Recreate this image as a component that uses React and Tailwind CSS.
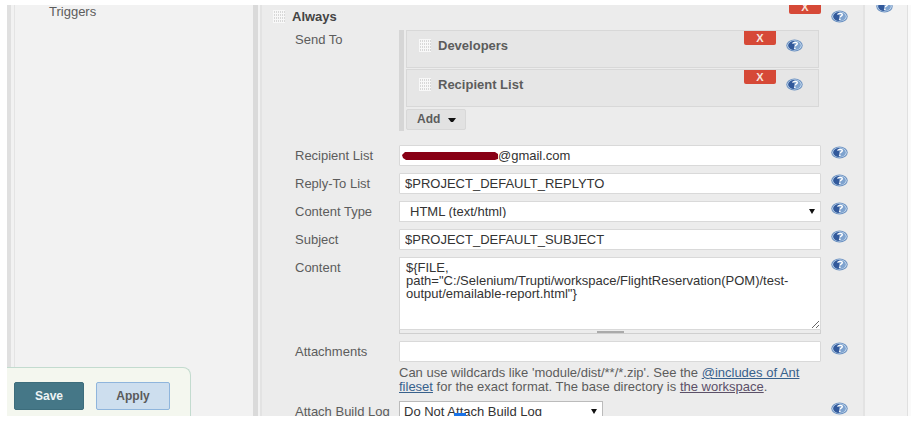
import React from 'react';

const HelpIcon = ({ label }) => (
  <button type="button" aria-label={`Help for ${label}`} className="block h-[13px] w-[17px] shrink-0">
    <svg viewBox="0 0 34 26" className="block h-full w-full" aria-hidden="true">
      <ellipse cx="17" cy="13" rx="16.4" ry="12" fill="#6a90c0" />
      <ellipse cx="17" cy="13" rx="14.4" ry="10.2" fill="#cfe0f1" />
      <ellipse cx="17" cy="13" rx="12.6" ry="9" fill="#7fa3cf" />
      <path d="M17 4a12.6 9 0 0 0 0 18l-1-5 2-4-3-4z" fill="#32599b" />
      <path
        d="M13.2 9.4c.8-3.4 9.4-3.6 9.4.2 0 2.8-4.8 2.6-4.8 5.4"
        fill="none"
        stroke="#fff"
        strokeWidth="2.8"
      />
      <ellipse cx="17.6" cy="18.6" rx="2" ry="1.5" fill="#fff" />
    </svg>
  </button>
);

const DragHandle = () => (
  <svg viewBox="0 0 12 13" className="h-[13px] w-3 shrink-0" aria-hidden="true">
    <rect width="12" height="13" fill="#f8f8f8" />
    {[1, 4, 7, 10].map((y) =>
      [1, 3, 5, 7, 9, 11].map((x) => (
        <rect key={`${x}-${y}`} x={x} y={y} width="1" height="2" fill="#d8d8d8" />
      ))
    )}
  </svg>
);

const DeleteButton = ({ label }) => (
  <button
    type="button"
    aria-label={`Delete ${label}`}
    className="absolute top-0 right-[42px] h-[14px] w-8 rounded-b-[2px] bg-[#d64937] text-[11px] leading-[13px] font-bold text-[#f6e4dc]"
  >
    X
  </button>
);

const Recipient = ({ name }) => (
  <div className="relative flex h-[38px] items-start justify-between border border-[#d8d8d8] bg-[#e6e6e6] pt-2 pr-[15px] pl-3">
    <div className="flex items-center gap-[7px]">
      <DragHandle />
      <span className="font-bold">{name}</span>
    </div>
    <HelpIcon label={name} />
    <DeleteButton label={name} />
  </div>
);

const Row = ({ label, id, children }) => (
  <div className="grid grid-cols-[104px_1fr_42px]">
    <label htmlFor={id} className="pt-1 leading-[14px] whitespace-nowrap">
      {label}
    </label>
    <div className="min-w-0">{children}</div>
    <div className="pt-[1px] pl-[10px]">
      <HelpIcon label={label} />
    </div>
  </div>
);

const fieldClass =
  'block h-[21px] w-full rounded-[1px] border border-[#d9d9d9] bg-white px-[5px] text-[#333] outline-none';

const TextField = ({ label, id, value }) => (
  <Row label={label} id={id}>
    <input id={id} type="text" defaultValue={value} className={fieldClass} />
  </Row>
);

const Arrow = () => (
  <svg viewBox="0 0 6 5" className="pointer-events-none absolute top-2 right-[6px] h-[5px] w-[6px]" aria-hidden="true">
    <path d="M0 0h6L3 5z" fill="#111" />
  </svg>
);

export default function App() {
  return (
    <div className="h-screen overflow-hidden bg-white py-[5px] pr-[6px] pl-[7px] font-['Liberation_Sans',Arial,sans-serif] text-[13px] leading-[13px] text-[#5c5c5c]">
      <div className="relative flex h-full overflow-hidden bg-[#f2f2f2]">
        <div className="w-1 shrink-0 bg-[#e0e0e0]" />
        <div className="ml-[3px] w-[239px] shrink-0 border-l border-[#e4e4e4]">
          <div className="pl-[34px]">Triggers</div>
        </div>
        <div className="w-[5px] shrink-0 bg-[#dadada]" />

        {/* Trigger settings, scrolled up slightly under the top edge */}
        <main className="relative -mt-[5px] ml-[2px] h-fit min-w-0 flex-1 border-x-2 border-[#e3e3e3] bg-[#ececec] pb-6">
          <DeleteButton label="Always" />
          <div className="flex items-center justify-between pt-[10px] pr-[15px] pl-[11px]">
            <div className="flex items-center gap-[7px] text-[#444]">
              <DragHandle />
              <span className="font-bold">Always</span>
            </div>
            <HelpIcon label="Always" />
          </div>

          <div className="mt-[7px] grid grid-cols-[104px_1fr_42px] pl-[33px]">
            <span className="pt-[3px]">Send To</span>
            <div className="border-l-[5px] border-[#d6d6d6] pr-[2px] pb-[1px] pl-[2px]">
              <div className="flex flex-col gap-[1px]">
                <Recipient name="Developers" />
                <Recipient name="Recipient List" />
              </div>
              <button
                type="button"
                className="mt-[2px] flex h-[21px] w-[60px] items-center gap-2 rounded-[2px] border border-[#d8d8d8] bg-[#e2e2e2] pl-[10px] text-[12px] font-bold"
              >
                Add
                <svg viewBox="0 0 8 4" className="h-1 w-2" aria-hidden="true">
                  <path d="M0 0h8L5 4H3z" fill="#111" />
                </svg>
              </button>
            </div>
          </div>

          <div className="mt-[14px] flex flex-col gap-[7px] pl-[33px]">
            <Row label="Recipient List" id="recipients">
              <div className="relative">
                <input
                  id="recipients"
                  type="text"
                  defaultValue="@gmail.com"
                  className="block h-[21px] w-full rounded-[1px] border border-[#d9d9d9] bg-white pl-[98px] text-[#333] outline-none"
                />
                <svg viewBox="0 0 97 10" className="absolute top-[6px] left-[3px] h-[10px] w-[97px]" aria-hidden="true">
                  <path d="M3 1h90l3 2v5l-3 1H4L1 7 0 4z" fill="#880015" />
                </svg>
              </div>
            </Row>
            <TextField label="Reply-To List" id="replyto" value="$PROJECT_DEFAULT_REPLYTO" />
            <Row label="Content Type" id="content-type">
              <div className="relative">
                <select
                  id="content-type"
                  className="block h-[21px] w-full appearance-none border border-[#d9d9d9] bg-white px-[10px] text-[#333] outline-none"
                >
                  <option>HTML (text/html)</option>
                </select>
                <Arrow />
              </div>
            </Row>
            <TextField label="Subject" id="subject" value="$PROJECT_DEFAULT_SUBJECT" />
            <Row label="Content" id="content">
              <textarea
                id="content"
                defaultValue={'${FILE,\npath="C:/Selenium/Trupti/workspace/FlightReservation(POM)/test-\noutput/emailable-report.html"}'}
                className="block h-[73px] w-full resize-y overflow-hidden border border-[#d9d9d9] bg-white px-[6px] pt-[3px] leading-[13px] text-[#333] outline-none"
              />
              <div className="flex h-1 items-center justify-center border-x border-b border-[#cfcfcf]">
                <div className="h-[2px] w-[27px] bg-[#aaa]" />
              </div>
            </Row>
            <Row label="Attachments" id="attachments">
              <input id="attachments" type="text" className={fieldClass} />
              <p className="mt-1 leading-[14px] whitespace-nowrap">
                Can use wildcards like 'module/dist/**/*.zip'. See the{' '}
                <a href="#fileset" className="text-[#38618c] underline">
                  @includes of Ant
                  <br />
                  fileset
                </a>{' '}
                for the exact format. The base directory is{' '}
                <a href="#workspace" className="text-[#5c5068] underline">the workspace</a>.
              </p>
            </Row>
            <Row label="Attach Build Log" id="build-log">
              <div className="relative w-[204px]">
                <select
                  id="build-log"
                  className="block h-[21px] w-full appearance-none border border-[#bbb] bg-white px-1 text-[#333] outline-none"
                >
                  <option>Do Not Attach Build Log</option>
                </select>
                <Arrow />
              </div>
            </Row>
          </div>
        </main>

        <aside className="-mt-[5px] flex w-[43px] shrink-0 justify-center border-r border-[#e0e0e0] pr-1">
          <HelpIcon label="Editable Email Notification" />
        </aside>
        <div className="w-[3px] shrink-0 bg-[#fafafa]" />

        {/* Sticky save bar */}
        <div className="absolute bottom-0 left-0 flex gap-3 rounded-tr-lg border-t border-r border-[#c3dbcf] bg-[#f4f7ef] pt-[14px] pr-5 pb-[6px] pl-[7px] text-[12px] font-bold">
          <button type="submit" className="h-7 w-[70px] rounded-[2px] border border-[#3d6d7c] bg-[#457787] text-[#eef3f5]">
            Save
          </button>
          <button type="button" className="h-7 w-[74px] rounded-[2px] border border-[#8fb5dc] bg-[#cddeee] text-[#5a5a5a]">
            Apply
          </button>
        </div>
        <div className="absolute bottom-0 left-[447px] h-[3px] w-3 bg-[#1a73e8]" />
      </div>
    </div>
  );
}
